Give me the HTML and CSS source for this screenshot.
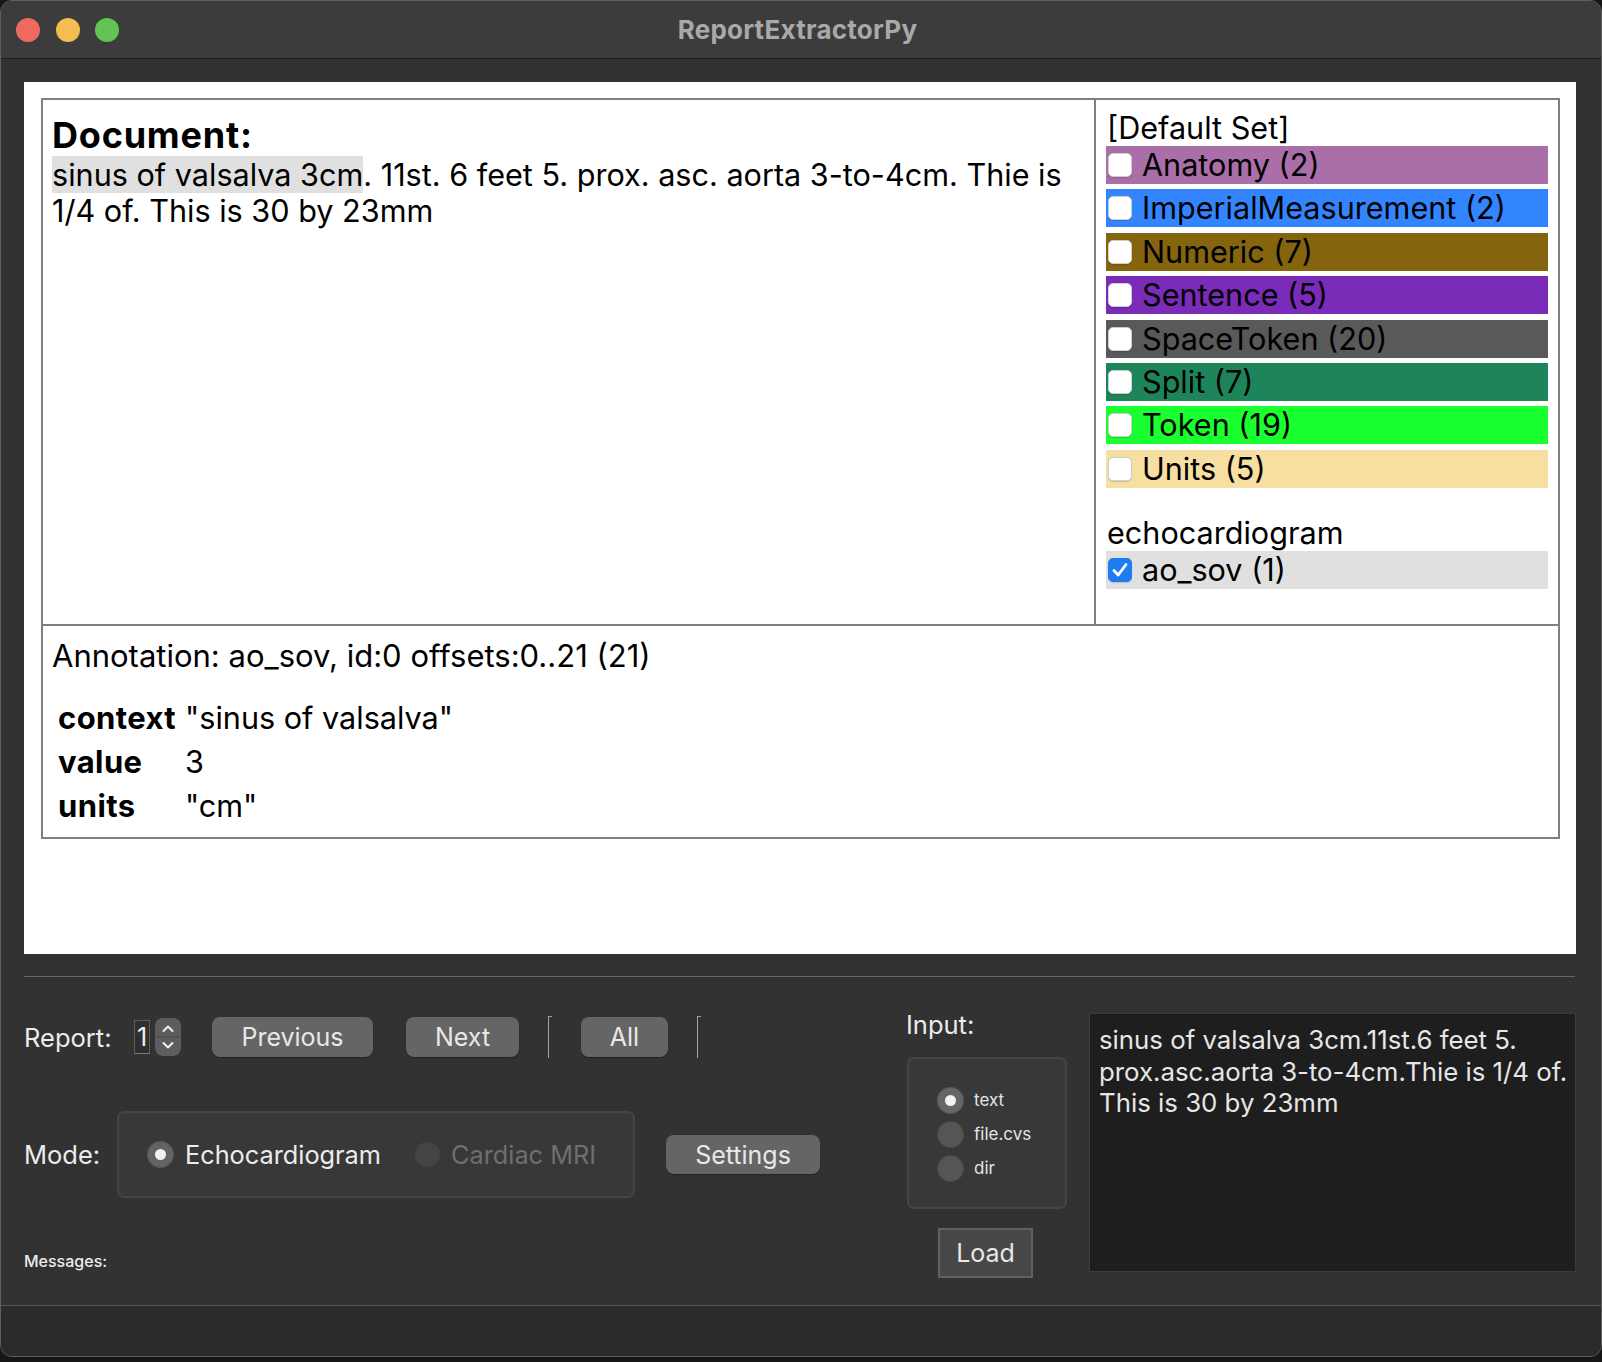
FILE: index.html
```html
<!DOCTYPE html>
<html>
<head>
<meta charset="utf-8">
<title>ReportExtractorPy</title>
<link rel="stylesheet" href="styles.css">
</head>
<body>
<div class="window">
  <div class="titlebar">
    <div class="lights">
      <span class="light red"></span>
      <span class="light yellow"></span>
      <span class="light green"></span>
    </div>
    <div class="title">ReportExtractorPy</div>
  </div>
  <div class="main">
    <div class="panel">
      <div class="frame">
        <div class="top">
          <div class="doc">
            <div class="doc-title">Document:</div>
            <div class="doc-text"><span class="hl">sinus of valsalva 3cm</span>. 11st. 6 feet 5. prox. asc. aorta 3-to-4cm. Thie is 1/4 of. This is 30 by 23mm</div>
          </div>
          <div class="legend">
            <div class="set-title">[Default Set]</div>
            <div class="row c-anatomy"><span class="cb"></span><span class="rtext">Anatomy (2)</span></div>
            <div class="row c-imperial"><span class="cb"></span><span class="rtext">ImperialMeasurement (2)</span></div>
            <div class="row c-numeric"><span class="cb"></span><span class="rtext">Numeric (7)</span></div>
            <div class="row c-sentence"><span class="cb"></span><span class="rtext">Sentence (5)</span></div>
            <div class="row c-space"><span class="cb"></span><span class="rtext">SpaceToken (20)</span></div>
            <div class="row c-split"><span class="cb"></span><span class="rtext">Split (7)</span></div>
            <div class="row c-token"><span class="cb"></span><span class="rtext">Token (19)</span></div>
            <div class="row c-units"><span class="cb"></span><span class="rtext">Units (5)</span></div>
            <div class="set-title echo">echocardiogram</div>
            <div class="row c-sel"><span class="cb checked"><svg viewBox="0 0 24 24" width="24" height="24"><path d="M6 12.5 L10.2 17 L18 6.5" fill="none" stroke="#fff" stroke-width="2.8" stroke-linecap="round" stroke-linejoin="round"/></svg></span><span class="rtext">ao_sov (1)</span></div>
          </div>
        </div>
        <div class="annot">
          <div class="annot-head">Annotation: ao_sov, id:0 offsets:0..21 (21)</div>
          <table class="features">
            <tr><th>context</th><td>"sinus of valsalva"</td></tr>
            <tr><th>value</th><td>3</td></tr>
            <tr><th>units</th><td>"cm"</td></tr>
          </table>
        </div>
      </div>
    </div>
    <div class="sep"></div>
    <div class="controls">
      <div class="left-col">
        <div class="report-row">
          <span class="lbl report-lbl">Report:</span>
          <span class="spin-val">1</span>
          <span class="stepper">
            <svg viewBox="0 0 26 38" width="26" height="38">
              <path d="M8.5 13 L13 8.5 L17.5 13" fill="none" stroke="#f0f0f0" stroke-width="2" stroke-linecap="round" stroke-linejoin="round"/>
              <line x1="1" y1="19" x2="25" y2="19" stroke="#4a4a4a" stroke-width="1"/>
              <path d="M8.5 25 L13 29.5 L17.5 25" fill="none" stroke="#f0f0f0" stroke-width="2" stroke-linecap="round" stroke-linejoin="round"/>
            </svg>
          </span>
          <button class="btn btn-prev">Previous</button>
          <button class="btn btn-next">Next</button>
          <span class="vline"></span>
          <button class="btn btn-all">All</button>
          <span class="vline"></span>
        </div>
        <div class="mode-row">
          <span class="lbl mode-lbl">Mode:</span>
          <div class="group mode-group">
            <span class="radio on"></span><span class="rlabel first">Echocardiogram</span>
            <span class="radio off"></span><span class="rlabel disabled">Cardiac MRI</span>
          </div>
          <button class="btn btn-settings">Settings</button>
        </div>
        <div class="messages">Messages:</div>
      </div>
      <div class="input-col">
        <div class="lbl input-lbl">Input:</div>
        <div class="group input-group">
          <div class="irow"><span class="radio sm on"></span><span class="ilabel">text</span></div>
          <div class="irow"><span class="radio sm"></span><span class="ilabel">file.cvs</span></div>
          <div class="irow"><span class="radio sm"></span><span class="ilabel">dir</span></div>
        </div>
        <button class="load">Load</button>
      </div>
      <div class="textarea">sinus of valsalva 3cm.11st.6 feet 5.<br>prox.asc.aorta 3-to-4cm.Thie is 1/4 of.<br>This is 30 by 23mm</div>
    </div>
  </div>
  <div class="statusbar"></div>
</div>
</body>
</html>
```

FILE: styles.css
```css
* { box-sizing: border-box; }
html, body { margin: 0; padding: 0; }
body {
  width: 1602px;
  height: 1362px;
  background: #161616;
  font-family: "Inter", "Noto Sans", sans-serif;
  overflow: hidden;
}
.window {
  width: 1602px;
  height: 1357px;
  border: 1px solid #5e5e5e;
  border-radius: 12px;
  overflow: hidden;
  background: #323232;
  display: flex;
  flex-direction: column;
}
.titlebar {
  height: 58px;
  flex: none;
  background: #3c3c3c;
  border-bottom: 1px solid #1c1c1c;
  display: flex;
  align-items: center;
}
.lights {
  display: flex;
  gap: 15.5px;
  margin-left: 15px;
  margin-top: 1px;
}
.light {
  width: 24px;
  height: 24px;
  border-radius: 50%;
  display: block;
}
.red { background: #ee6a5e; }
.yellow { background: #f5bd4f; }
.green { background: #61c454; }
.title {
  flex: 1;
  text-align: center;
  margin-right: 125px;
  color: #a9a9a9;
  font-weight: 700;
  font-size: 26px;
  letter-spacing: 0.25px;
}
.main {
  height: 1246px;
  flex: none;
  display: flex;
  flex-direction: column;
}
.panel {
  margin: 23px 0 0 23px;
  width: 1552px;
  height: 872px;
  background: #ffffff;
  padding: 16px 0 0 17px;
  flex: none;
}
.frame {
  width: 1519px;
  height: 741px;
  border: 2px solid #808080;
  color: #000;
  font-size: 30.6px;
}
.top {
  height: 526px;
  display: flex;
  border-bottom: 2px solid #808080;
}
.doc {
  width: 1053px;
  border-right: 2px solid #808080;
  padding: 14px 8px 0 9px;
}
.doc-title {
  font-weight: 700;
  font-size: 36px;
  line-height: 42px;
  letter-spacing: 0.8px;
}
.doc-text {
  line-height: 36px;
  margin-top: 1px;
}
.hl { background: #e0e0e0; }
.legend {
  flex: 1;
  padding: 10px 10px 0 10px;
}
.set-title {
  line-height: 36px;
  height: 36px;
  padding-left: 1px;
  white-space: nowrap;
}
.set-title.echo {
  margin-top: 27px;
  height: 36px;
}
.row {
  height: 38px;
  margin-bottom: 5.4px;
  display: flex;
  align-items: center;
  line-height: 38px;
}
.row .cb {
  width: 24px;
  height: 24px;
  margin-left: 2px;
  margin-right: 10px;
  border-radius: 5px;
  background: #ffffff;
  border: 1px solid #cfcfcf;
  box-shadow: 0 0.5px 1px rgba(0,0,0,0.15);
  flex: none;
  display: block;
}
.row .cb.checked {
  background: #1d7cf2;
  border-color: #1d7cf2;
}
.row .cb svg { display: block; margin: -1px; }
.rtext { white-space: nowrap; }
.c-anatomy { background: #aa6ea9; }
.c-imperial { background: #3385ff; }
.c-numeric { background: #85640e; }
.c-sentence { background: #7a2bb8; }
.c-space { background: #595959; }
.c-split { background: #1e855b; }
.c-token { background: #19ff2f; }
.c-units { background: #f6dfa0; }
.c-sel { background: #e0e0e0; }
.annot {
  padding: 12px 9px 0 9px;
}
.annot-head {
  line-height: 36px;
  font-size: 31px;
  white-space: nowrap;
}
.features {
  border-collapse: collapse;
  margin-top: 22px;
  margin-left: 4px;
}
.features th {
  text-align: left;
  font-weight: 700;
  font-size: 31px;
  letter-spacing: 0.4px;
  width: 129px;
  padding: 0 0 0 2px;
  height: 44px;
  line-height: 44px;
}
.features td {
  padding: 0;
  height: 44px;
  line-height: 44px;
}
.sep {
  margin: 22px 0 0 23px;
  width: 1551px;
  height: 1px;
  background: #686868;
  flex: none;
}
.controls {
  flex: 1;
  display: flex;
  padding-left: 23px;
  color: #e6e6e6;
}
.left-col {
  width: 882px;
  flex: none;
}
.lbl {
  font-size: 25.5px;
  color: #ececec;
}
.report-row {
  margin-top: 39px;
  height: 42px;
  display: flex;
  align-items: center;
}
.report-lbl { width: 110px; flex: none; }
.spin-val {
  width: 16px;
  height: 34px;
  border: 1px solid #5c5c5c;
  border-bottom-color: #7a7a7a;
  background: #2e2e2e;
  font-size: 25px;
  line-height: 32px;
  text-align: center;
  color: #f0f0f0;
  flex: none;
}
.stepper {
  margin-left: 5px;
  width: 26px;
  height: 38px;
  border-radius: 8px;
  background: #5d5d5d;
  display: block;
  flex: none;
}
.stepper svg { display: block; }
.btn {
  font-family: "Inter", "Noto Sans", sans-serif;
  font-size: 25px;
  color: #e8e8e8;
  background: #656565;
  border: none;
  border-radius: 8px;
  height: 40px;
  padding: 0;
  flex: none;
  box-shadow: 0 1px 1px rgba(0,0,0,0.3);
}
.btn-prev { margin-left: 31px; width: 161px; }
.btn-next { margin-left: 33px; width: 113px; }
.btn-all { margin-left: 29px; width: 87px; }
.vline {
  margin-left: 29px;
  width: 4px;
  height: 42px;
  border-left: 1px solid #a3a3a3;
  border-top: 1px solid #a3a3a3;
  flex: none;
}
.mode-row {
  margin-top: 53px;
  height: 87px;
  display: flex;
  align-items: center;
}
.mode-lbl { width: 93px; flex: none; }
.group {
  background: #383838;
  border: 2px solid #454545;
  border-radius: 7px;
}
.mode-group {
  width: 518px;
  height: 87px;
  display: flex;
  align-items: center;
  padding-left: 28px;
  flex: none;
}
.radio {
  width: 27px;
  height: 27px;
  border-radius: 50%;
  background: #4a4a4a;
  flex: none;
  display: block;
  position: relative;
  box-shadow: inset 0 0 0 1px rgba(0,0,0,0.15);
}
.radio.on {
  background: #636363;
}
.radio.on::after {
  content: "";
  position: absolute;
  left: 8px;
  top: 8px;
  width: 11px;
  height: 11px;
  border-radius: 50%;
  background: #f2f2f2;
}
.radio.off { background: #444444; }
.rlabel {
  font-size: 25.3px;
  margin-left: 11px;
  color: #ececec;
}
.rlabel.first { width: 229px; flex: none; }
.rlabel.disabled { color: #6f6f6f; margin-left: 10px; }
.btn-settings { margin-left: 31px; width: 154px; height: 39px; }
.messages {
  margin-top: 53px;
  font-size: 16px;
  line-height: 20px;
  font-weight: 500;
  color: #ececec;
}
.input-col {
  width: 161px;
  flex: none;
}
.input-lbl {
  margin-top: 32px;
  line-height: 32px;
}
.input-group {
  margin-top: 16px;
  margin-left: 1px;
  width: 160px;
  height: 152px;
  padding-top: 24px;
  padding-left: 28px;
}
.irow {
  height: 34px;
  display: flex;
  align-items: center;
}
.radio.sm {
  width: 27px;
  height: 27px;
  background: #555555;
}
.radio.sm.on { background: #666666; }
.ilabel {
  font-size: 17px;
  margin-left: 10px;
  color: #e4e4e4;
}
.load {
  display: block;
  margin-top: 19px;
  margin-left: 32px;
  width: 95px;
  height: 50px;
  background: #474747;
  border: 2px solid #606060;
  border-radius: 0;
  color: #e8e8e8;
  font-family: "Inter", "Noto Sans", sans-serif;
  font-size: 25px;
  padding: 0;
}
.textarea {
  margin-top: 36px;
  margin-left: 22px;
  width: 487px;
  height: 259px;
  background: #1e1e1e;
  border: 1px solid #3b3b3b;
  padding: 10px 8px 0 9px;
  font-size: 25.8px;
  line-height: 31.5px;
  color: #e6e6e6;
  flex: none;
  white-space: nowrap;
}
.statusbar {
  flex: 1;
  background: #2b2b2b;
  border-top: 1px solid #555555;
}
```
